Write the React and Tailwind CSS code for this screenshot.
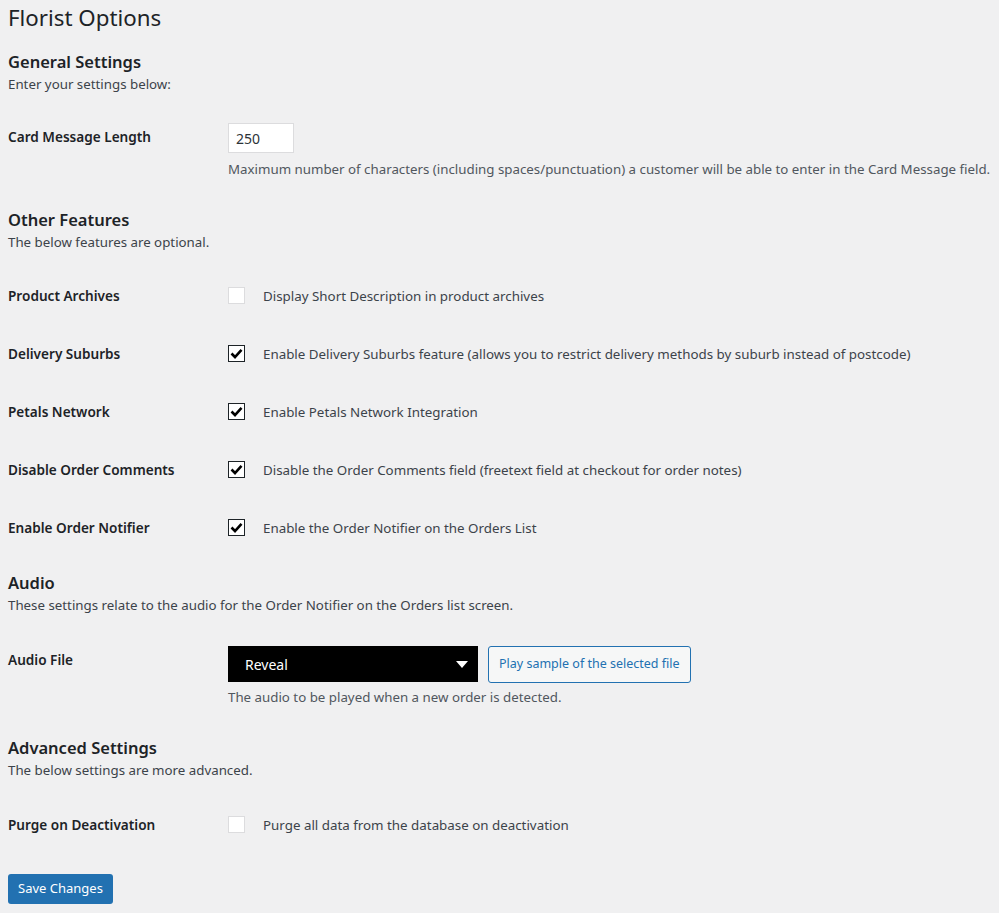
import React from "react";

const font = { fontFamily: '"Noto Sans", "Open Sans", sans-serif' };

function Check({ checked }) {
  if (checked) {
    return (
      <span className="flex h-[17px] w-[17px] shrink-0 items-center justify-center border border-[#1d2327] bg-white">
        <svg width="13" height="11" viewBox="0 0 13 11">
          <path d="M1.5 5.5 L5 9 L11.5 1.8" fill="none" stroke="#000" strokeWidth="2.6" />
        </svg>
      </span>
    );
  }
  return <span className="block h-[17px] w-[17px] shrink-0 border border-[#dcdcde] bg-white" />;
}

function CheckRow({ label, text, checked }) {
  return (
    <div className="flex h-[58px] items-center">
      <div className="w-[220px] text-[13.6px] font-semibold text-[#1d2327]">{label}</div>
      <div className="flex items-center gap-[18px]">
        <Check checked={checked} />
        <span className="text-[13.35px] text-[#3c434a]">{text}</span>
      </div>
    </div>
  );
}

function SectionHead({ title, desc }) {
  return (
    <div>
      <h2 className="text-[16.5px] font-semibold leading-[22px] text-[#1d2327]">{title}</h2>
      <p className="mt-[1px] text-[13.3px] leading-[20px] text-[#3c434a]">{desc}</p>
    </div>
  );
}

export default function App() {
  return (
    <div className="min-h-[913px] bg-[#f0f0f1] px-[8px] text-[#1d2327]" style={font}>
      <h1 className="pt-[3px] text-[22.3px] leading-[29px] font-normal text-[#1d2327]">Florist Options</h1>

      <div className="mt-[19px]">
        <SectionHead title="General Settings" desc="Enter your settings below:" />
      </div>

      <div className="mt-[29px] flex">
        <div className="w-[220px] pt-[4px] text-[13.6px] font-semibold">Card Message Length</div>
        <div>
          <div className="flex h-[30px] w-[66px] items-center border border-[#dcdcde] bg-white px-[7px] text-[14px] text-[#2c3338]">250</div>
          <p className="mt-[7px] text-[13.3px] text-[#50575e]">
            Maximum number of characters (including spaces/punctuation) a customer will be able to enter in the Card Message field.
          </p>
        </div>
      </div>

      <div className="mt-[29px]">
        <SectionHead title="Other Features" desc="The below features are optional." />
      </div>

      <div className="mt-[15px]">
        <CheckRow label="Product Archives" text="Display Short Description in product archives" checked={false} />
        <CheckRow label="Delivery Suburbs" text="Enable Delivery Suburbs feature (allows you to restrict delivery methods by suburb instead of postcode)" checked />
        <CheckRow label="Petals Network" text="Enable Petals Network Integration" checked />
        <CheckRow label="Disable Order Comments" text="Disable the Order Comments field (freetext field at checkout for order notes)" checked />
        <CheckRow label="Enable Order Notifier" text="Enable the Order Notifier on the Orders List" checked />
      </div>

      <div className="mt-[15px]">
        <SectionHead title="Audio" desc="These settings relate to the audio for the Order Notifier on the Orders list screen." />
      </div>

      <div className="mt-[31px] flex">
        <div className="w-[220px] pt-[4px] text-[13.6px] font-semibold">Audio File</div>
        <div>
          <div className="flex items-center gap-[10px]">
            <div className="flex h-[36px] w-[250px] items-center justify-between bg-black pl-[17px] pr-[10px] text-[14px] text-white">
              <span>Reveal</span>
              <svg width="12" height="7" viewBox="0 0 12 7">
                <path d="M0 0 H12 L6 7 Z" fill="#fff" />
              </svg>
            </div>
            <button className="h-[37px] rounded-[3px] border border-[#2271b1] bg-[#f6f7f7] px-[10px] text-[12.5px] text-[#2271b1]">
              Play sample of the selected file
            </button>
          </div>
          <p className="mt-[5px] text-[13.3px] text-[#50575e]">The audio to be played when a new order is detected.</p>
        </div>
      </div>

      <div className="mt-[29px]">
        <SectionHead title="Advanced Settings" desc="The below settings are more advanced." />
      </div>

      <div className="mt-[16px]">
        <CheckRow label="Purge on Deactivation" text="Purge all data from the database on deactivation" checked={false} />
      </div>

      <div className="mt-[20px]">
        <button className="h-[30px] rounded-[3px] bg-[#2271b1] px-[10px] text-[13px] text-white">Save Changes</button>
      </div>
    </div>
  );
}
